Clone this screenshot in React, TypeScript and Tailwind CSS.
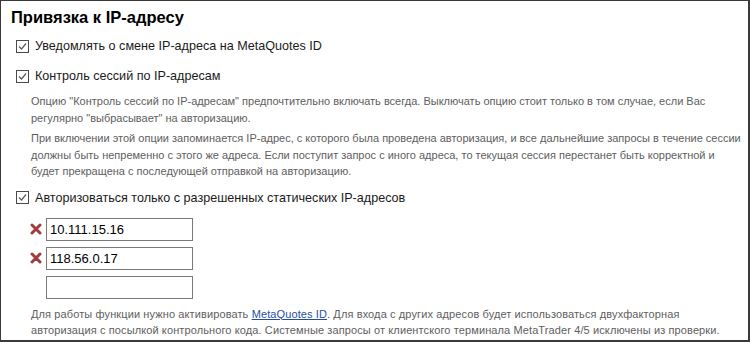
import React from "react";

function CheckMark() {
  return (
    <svg width="13" height="13" viewBox="0 0 13 13" className="shrink-0">
      <rect x="0.5" y="0.5" width="12" height="12" fill="#fff" stroke="#4a4a4a" />
      <path d="M3 6.5 L5.5 9 L10 3.5" fill="none" stroke="#5a5a5a" strokeWidth="1.2" />
    </svg>
  );
}

function RemoveIcon() {
  return (
    <svg width="12" height="12" viewBox="0 0 12 12" className="shrink-0">
      <path d="M2 2 L10 10 M10 2 L2 10" stroke="#a23b3b" strokeWidth="3" strokeLinecap="round" />
    </svg>
  );
}

function Option({ label }: { label: string }) {
  return (
    <label className="flex items-center gap-[6px] pl-[5px] text-[12.6px] text-[#1a1a1a] leading-[16px]">
      <CheckMark />
      <span>{label}</span>
    </label>
  );
}

function IpRow({ value, removable }: { value: string; removable?: boolean }) {
  return (
    <div className="flex items-center gap-[4px] pl-[19px]">
      <div className="w-[12px] flex justify-center">{removable && <RemoveIcon />}</div>
      <input
        readOnly
        value={value}
        className="w-[147px] h-[23px] border border-[#7a7a7a] px-[3px] text-[13px] text-black outline-none font-['Liberation_Sans',sans-serif]"
      />
    </div>
  );
}

export default function App() {
  const ips = ["10.111.15.16", "118.56.0.17"];

  return (
    <div className="w-[750px] h-[342px] border border-[#3a3a3a] border-r-2 border-b-2 bg-white pl-[10px] pt-[5px] font-['Liberation_Sans',sans-serif] overflow-hidden">
      <h2 className="text-[16.5px] font-bold text-black leading-[22px]">Привязка к IP-адресу</h2>

      <div className="mt-[10px]">
        <Option label="Уведомлять о смене IP-адреса на MetaQuotes ID" />
      </div>
      <div className="mt-[14px]">
        <Option label="Контроль сессий по IP-адресам" />
      </div>

      <div className="pl-[20px] mt-[9px] text-[11px] leading-[16.5px] text-[#5e5e5e] whitespace-nowrap">
        <p>
          Опцию "Контроль сессий по IP-адресам" предпочтительно включать всегда. Выключать опцию стоит только в том случае, если Вас
          <br />
          регулярно "выбрасывает" на авторизацию.
        </p>
        <p className="mt-[4px]">
          При включении этой опции запоминается IP-адрес, с которого была проведена авторизация, и все дальнейшие запросы в течение сессии
          <br />
          должны быть непременно с этого же адреса. Если поступит запрос с иного адреса, то текущая сессия перестанет быть корректной и
          <br />
          будет прекращена с последующей отправкой на авторизацию.
        </p>
      </div>

      <div className="mt-[10px]">
        <Option label="Авторизоваться только с разрешенных статических IP-адресов" />
      </div>

      <div className="mt-[12px] flex flex-col gap-[6px]">
        {ips.map((ip) => (
          <IpRow key={ip} value={ip} removable />
        ))}
        <IpRow value="" />
      </div>

      <p className="pl-[20px] mt-[7px] text-[11px] leading-[16px] text-[#5e5e5e] whitespace-nowrap tracking-[0.01em]">
        Для работы функции нужно активировать{" "}
        <a href="#" className="text-[#1f4fa3] underline">
          MetaQuotes ID
        </a>
        . Для входа с других адресов будет использоваться двухфакторная
        <br />
        авторизация с посылкой контрольного кода. Системные запросы от клиентского терминала MetaTrader 4/5 исключены из проверки.
      </p>
    </div>
  );
}
